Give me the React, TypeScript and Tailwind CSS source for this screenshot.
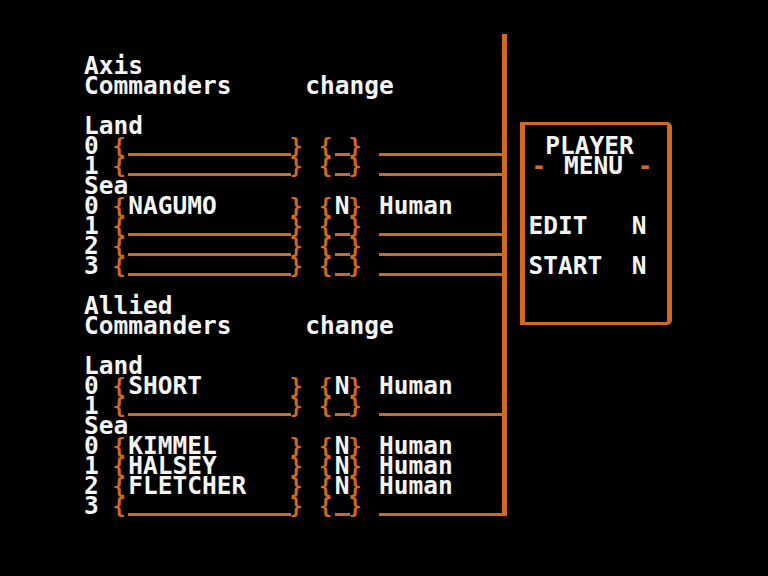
import React from 'react'

const C = 'w-[14.75px] shrink-0'

function Brace({ ch }: { ch: string }) {
  return <span className={`${C} font-bold text-[22px] text-[#d2691e] -translate-x-[1px]`}>{ch}</span>
}

function Slot({ idx, name, human }: { idx: string; name?: string; human?: boolean }) {
  return (
    <div className="flex h-[20px]">
      <span className="w-[29.5px] shrink-0">{idx}</span>
      <Brace ch="{" />
      {name ? (
        <span className="w-[162.25px] shrink-0">{name}</span>
      ) : (
        <span className="w-[162.25px] shrink-0 border-b-[3px] border-[#d2691e]" />
      )}
      <Brace ch="}" />
      <span className={C} />
      <Brace ch="{" />
      {human ? (
        <span className={C}>N</span>
      ) : (
        <span className={`${C} border-b-[3px] border-[#d2691e]`} />
      )}
      <Brace ch="}" />
      <span className={C} />
      {human ? (
        <span className="flex-1">Human</span>
      ) : (
        <span className="flex-1 border-b-[3px] border-[#d2691e]" />
      )}
    </div>
  )
}

function Line({ children }: { children?: React.ReactNode }) {
  return <div className="h-[20px] whitespace-pre">{children}</div>
}

export default function App() {
  return (
    <div className="w-[768px] h-[576px] bg-black overflow-hidden pl-[84px] pt-[34px] font-['DejaVu_Sans_Mono','Liberation_Mono',monospace] font-bold text-[24.5px] leading-[20px] text-[#f4f4f4]">
      <div className="flex h-[482px]">
        <div className="w-[423px] shrink-0 pt-[2px] border-r-[5px] border-[#d2691e]">
          <Line />
          <Line>Axis</Line>
          <Line>{'Commanders     change'}</Line>
          <Line />
          <Line>Land</Line>
          <Slot idx="0" />
          <Slot idx="1" />
          <Line>Sea</Line>
          <Slot idx="0" name="NAGUMO" human />
          <Slot idx="1" />
          <Slot idx="2" />
          <Slot idx="3" />
          <Line />
          <Line>Allied</Line>
          <Line>{'Commanders     change'}</Line>
          <Line />
          <Line>Land</Line>
          <Slot idx="0" name="SHORT" human />
          <Slot idx="1" />
          <Line>Sea</Line>
          <Slot idx="0" name="KIMMEL" human />
          <Slot idx="1" name="HALSEY" human />
          <Slot idx="2" name="FLETCHER" human />
          <Slot idx="3" />
        </div>
        <div className="ml-[13px] mt-[88px] w-[152px] h-[203px] shrink-0 border-x-[5px] border-y-[3px] border-[#d2691e] rounded-tr-[5px] rounded-br-[5px] pl-[3.5px] pt-[11px]">
          <div className="h-[20px] whitespace-pre pl-[2px]">{' PLAYER'}</div>
          <div className="h-[20px] whitespace-pre pl-[3px]">
            <span className="text-[#d2691e]">-</span>
            <span className="pl-[3px]">{' MENU '}</span>
            <span className="text-[#d2691e]">-</span>
          </div>
          <Line />
          <Line />
          <Line>{'EDIT   N'}</Line>
          <Line />
          <Line>{'START  N'}</Line>
        </div>
      </div>
    </div>
  )
}
